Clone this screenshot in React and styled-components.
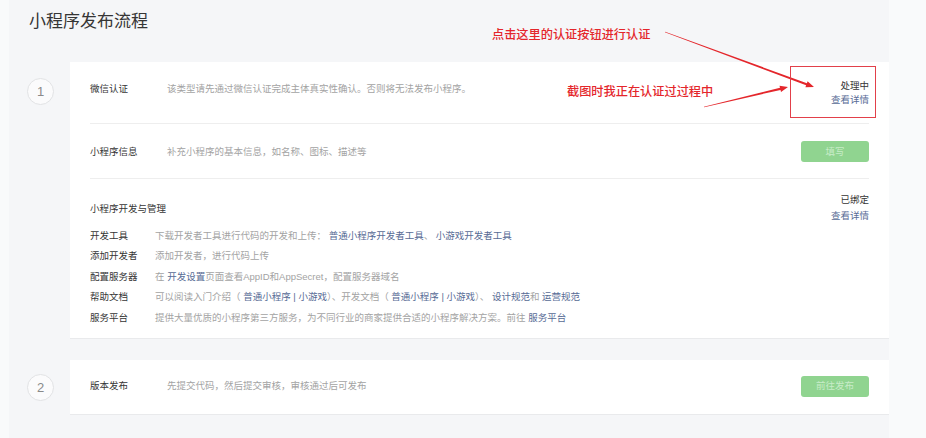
import React from 'react';
import styled, { createGlobalStyle } from 'styled-components';

const GlobalStyle = createGlobalStyle`
    html, body {
        margin: 0;
        padding: 0;
        background: #f9fafb;
    }
    body {
        font-family: "Liberation Sans", "Noto Sans CJK SC", sans-serif;
        color: #353535;
    }
`;

const Page = styled.div`
    position: relative;
    width: 926px;
    height: 438px;
    overflow: hidden;
`;

const Panel = styled.div`
    margin-left: 9px;
    width: 880px;
    height: 438px;
    background: #f5f6f8;
    box-sizing: border-box;
    padding-top: 10px;
`;

const Title = styled.h1`
    margin: 0 0 28px 20px;
    font-size: 17px;
    line-height: 24px;
    font-weight: 400;
    color: #353535;
`;

const Step = styled.div`
    display: flex;
    align-items: flex-start;
    margin-bottom: 21px;
`;

const StepNum = styled.div`
    flex: none;
    width: 25px;
    height: 25px;
    margin: ${p => p.$top}px 16px 0 18px;
    border: 1px solid #e2e3e5;
    border-radius: 50%;
    background: #fbfbfc;
    display: flex;
    align-items: center;
    justify-content: center;
    font-size: 13px;
    color: #8a8a8a;
`;

const Card = styled.div`
    flex: 1;
    background: #fff;
    padding: 0 20px;
    border-bottom: 1px solid #e9eaec;
`;

const Row = styled.div`
    display: flex;
    align-items: ${p => p.$align || 'center'};
    padding: ${p => p.$pad || '17px 0 16px'};
    border-bottom: ${p => (p.$last ? 'none' : '1px solid #eeeeee')};
    font-size: 9.5px;
    line-height: 14px;
`;

const Label = styled.div`
    flex: none;
    width: ${p => p.$w || 77}px;
    color: #353535;
    margin-top: ${p => p.$top || 0}px;
`;

const Desc = styled.div`
    flex: 1;
    color: #a3a3a3;
    margin-top: ${p => p.$top || 0}px;
`;

const Link = styled.span`
    color: #576b95;
`;

const Status = styled.div`
    text-align: right;
    line-height: ${p => p.$lh || 14}px;

    & > * {
        display: block;
        height: ${p => p.$lh || 14}px;
    }
`;

const Button = styled.div`
    width: 68px;
    height: 21px;
    border-radius: 3px;
    background: #90d490;
    color: #c8ecc8;
    font-size: 9.5px;
    display: flex;
    align-items: center;
    justify-content: center;
`;

const Section = styled.div`
    padding: 13px 0 10px;
    font-size: 9.5px;
`;

const SectionHead = styled.div`
    display: flex;
    align-items: center;
    justify-content: space-between;
    margin-bottom: 2px;
`;

const SubRow = styled.div`
    display: flex;
    height: 20.4px;
    line-height: 20.4px;
`;

const Note = styled.div`
    position: absolute;
    left: ${p => p.$x}px;
    top: ${p => p.$y}px;
    font-size: 12.2px;
    line-height: 16px;
    font-weight: 500;
    color: #e4262b;
    font-family: "Noto Sans CJK SC", sans-serif;
    white-space: nowrap;
`;

const Overlay = styled.svg`
    position: absolute;
    left: 0;
    top: 0;
    pointer-events: none;
`;

// tapered arrow: thin at start, thicker towards the head
const arrow = (x1, y1, x2, y2) => {
    const dx = x2 - x1;
    const dy = y2 - y1;
    const len = Math.hypot(dx, dy);
    const ux = dx / len;
    const uy = dy / len;
    const nx = -uy;
    const ny = ux;
    const head = 8;
    const bx = x2 - ux * head;
    const by = y2 - uy * head;
    const w0 = 0.3;
    const w1 = 1.1;
    const hw = 3.2;
    const pts = [
        [x1 + nx * w0, y1 + ny * w0],
        [bx + nx * w1, by + ny * w1],
        [bx + nx * hw, by + ny * hw],
        [x2, y2],
        [bx - nx * hw, by - ny * hw],
        [bx - nx * w1, by - ny * w1],
        [x1 - nx * w0, y1 - ny * w0],
    ];
    return pts.map(p => p.map(v => v.toFixed(1)).join(',')).join(' ');
};

const App = () => {
    return (
        <Page>
            <GlobalStyle />
            <Panel>
                <Title>小程序发布流程</Title>

                <Step>
                    <StepNum $top={16}>1</StepNum>
                    <Card>
                        <Row $align="flex-start" $pad="17px 0 16px">
                            <Label $top={3}>微信认证</Label>
                            <Desc $top={3}>该类型请先通过微信认证完成主体真实性确认。否则将无法发布小程序。</Desc>
                            <Status>
                                <div>处理中</div>
                                <Link>查看详情</Link>
                            </Status>
                        </Row>
                        <Row>
                            <Label>小程序信息</Label>
                            <Desc>补充小程序的基本信息，如名称、图标、描述等</Desc>
                            <Button>填写</Button>
                        </Row>
                        <Section>
                            <SectionHead>
                                <Label $w={160}>小程序开发与管理</Label>
                                <Status $lh={16}>
                                    <div>已绑定</div>
                                    <Link>查看详情</Link>
                                </Status>
                            </SectionHead>
                            <SubRow>
                                <Label $w={65}>开发工具</Label>
                                <Desc>下载开发者工具进行代码的开发和上传： <Link>普通小程序开发者工具</Link>、 <Link>小游戏开发者工具</Link></Desc>
                            </SubRow>
                            <SubRow>
                                <Label $w={65}>添加开发者</Label>
                                <Desc>添加开发者，进行代码上传</Desc>
                            </SubRow>
                            <SubRow>
                                <Label $w={65}>配置服务器</Label>
                                <Desc>在 <Link>开发设置</Link>页面查看AppID和AppSecret，配置服务器域名</Desc>
                            </SubRow>
                            <SubRow>
                                <Label $w={65}>帮助文档</Label>
                                <Desc>可以阅读入门介绍（ <Link>普通小程序 | 小游戏</Link>）、开发文档（ <Link>普通小程序 | 小游戏</Link>）、 <Link>设计规范</Link>和 <Link>运营规范</Link></Desc>
                            </SubRow>
                            <SubRow>
                                <Label $w={65}>服务平台</Label>
                                <Desc>提供大量优质的小程序第三方服务，为不同行业的商家提供合适的小程序解决方案。前往 <Link>服务平台</Link></Desc>
                            </SubRow>
                        </Section>
                    </Card>
                </Step>

                <Step>
                    <StepNum $top={14}>2</StepNum>
                    <Card>
                        <Row $last $pad="16px 0 17px">
                            <Label>版本发布</Label>
                            <Desc>先提交代码，然后提交审核，审核通过后可发布</Desc>
                            <Button>前往发布</Button>
                        </Row>
                    </Card>
                </Step>
            </Panel>

            <Note $x={492} $y={26}>点击这里的认证按钮进行认证</Note>
            <Note $x={567} $y={83}>截图时我正在认证过过程中</Note>
            <Overlay width="926" height="438" viewBox="0 0 926 438">
                <polygon points={arrow(665, 32, 814, 87)} fill="#e4262b" />
                <polygon points={arrow(704, 107, 788, 87)} fill="#e4262b" />
                <rect x="790.5" y="66.5" width="85" height="51" fill="none" stroke="#e2404a" strokeWidth="1" />
            </Overlay>
        </Page>
    );
};

export default App;
